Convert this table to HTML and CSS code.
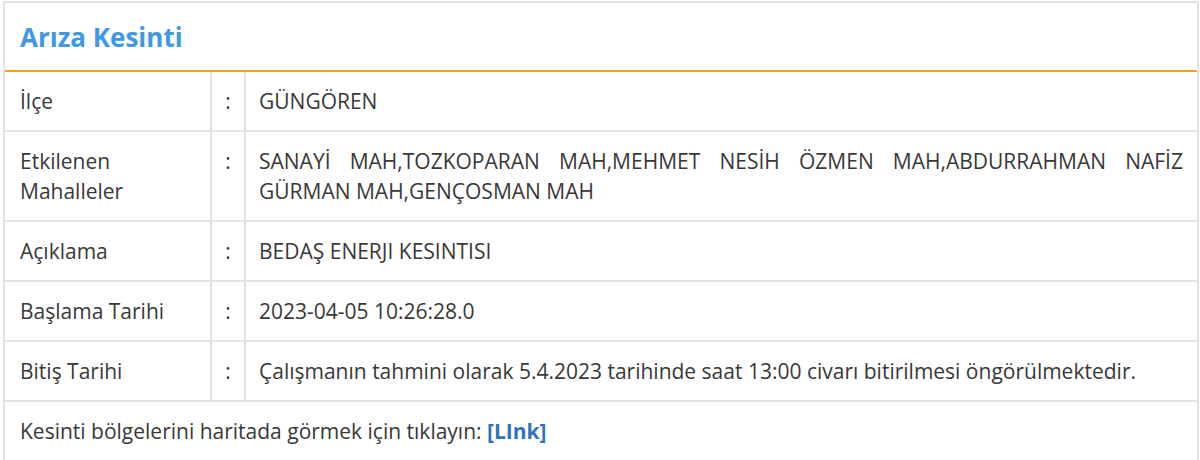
FILE: index.html
```html
<!DOCTYPE html>
<html lang="tr">
<head>
<meta charset="utf-8">
<link rel="stylesheet" href="styles.css">
</head>
<body>
<div class="panel">
  <div class="panel-head">
    <h2 class="panel-title">Arıza Kesinti</h2>
  </div>
  <table class="info">
    <colgroup>
      <col class="col-label">
      <col class="col-sep">
      <col>
    </colgroup>
    <tr>
      <td class="label">İlçe</td>
      <td class="sep">:</td>
      <td class="value">GÜNGÖREN</td>
    </tr>
    <tr>
      <td class="label">Etkilenen Mahalleler</td>
      <td class="sep">:</td>
      <td class="value">SANAYİ MAH,TOZKOPARAN MAH,MEHMET NESİH ÖZMEN MAH,ABDURRAHMAN NAFİZ GÜRMAN MAH,GENÇOSMAN MAH</td>
    </tr>
    <tr>
      <td class="label">Açıklama</td>
      <td class="sep">:</td>
      <td class="value">BEDAŞ ENERJI KESINTISI</td>
    </tr>
    <tr>
      <td class="label">Başlama Tarihi</td>
      <td class="sep">:</td>
      <td class="value">2023-04-05 10:26:28.0</td>
    </tr>
    <tr>
      <td class="label">Bitiş Tarihi</td>
      <td class="sep">:</td>
      <td class="value">Çalışmanın tahmini olarak 5.4.2023 tarihinde saat 13:00 civarı bitirilmesi öngörülmektedir.</td>
    </tr>
    <tr>
      <td class="foot" colspan="3">Kesinti bölgelerini haritada görmek için tıklayın: <a class="map-link" href="#">[LInk]</a></td>
    </tr>
  </table>
</div>
</body>
</html>
```

FILE: styles.css
```css
html, body {
  margin: 0;
  padding: 0;
  background: #ffffff;
}

body {
  font-family: "Open Sans", "Noto Sans", sans-serif;
  color: #383838;
  font-size: 21px;
}

.panel {
  margin: 1px 1px 0 3px;
  border: 2px solid #e3e3e3;
  border-bottom: none;
  background: #fff;
}

.panel-head {
  height: 67px;
  display: flex;
  align-items: center;
  padding: 0 15px;
  border-bottom: 2px solid #f5a31f;
}

.panel-title {
  margin: 0;
  font-size: 26px;
  font-weight: 700;
  color: #3d98e6;
}

.info {
  width: 100%;
  border-collapse: collapse;
  table-layout: fixed;
}

.col-label {
  width: 206px;
}

.col-sep {
  width: 34px;
}

.info td {
  border: 2px solid #e3e3e3;
  padding: 14px 15px;
  line-height: 30px;
  vertical-align: top;
}

.info tr:first-child td {
  border-top: none;
}

.info td:first-child {
  border-left: none;
}

.info td:last-child {
  border-right: none;
}

.sep {
  padding-left: 0 !important;
  padding-right: 0 !important;
  text-align: center;
}

.value {
  text-align: justify;
  padding-left: 13px !important;
  padding-right: 14px !important;
}

.foot {
  border-bottom: none !important;
}

.map-link {
  color: #2f72bd;
  font-weight: 700;
  text-decoration: none;
}
```
